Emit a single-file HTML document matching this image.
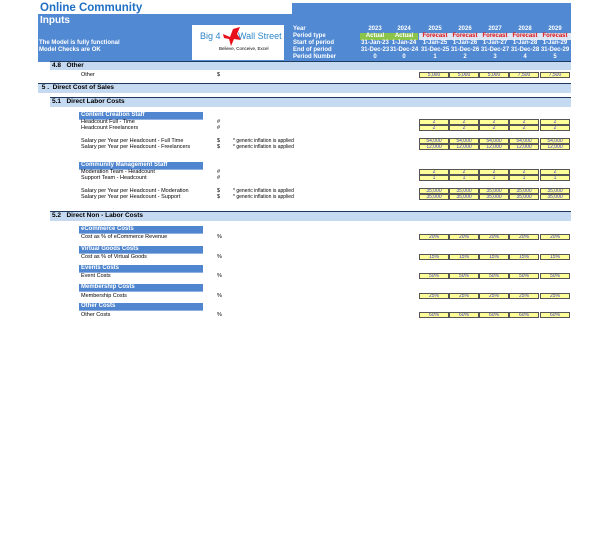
<!DOCTYPE html>
<html><head><meta charset="utf-8"><style>
*{margin:0;padding:0;box-sizing:border-box}
body{width:600px;height:537px;background:#fff;position:relative;overflow:hidden;font-family:"Liberation Sans",Arial,sans-serif;font-size:5.5px;color:#000}
div{position:absolute;white-space:nowrap}
.hb{color:#fff;font-weight:bold;font-size:6px;line-height:7px}
.c{text-align:center;width:30px}
.bar{background:#c5d9f1;border-top:1.5px solid #1f3a5f;font-weight:bold;font-size:6.5px;line-height:7px;padding-left:2px}
.sh{background:#4f86cf;color:#fff;font-weight:bold;font-size:6px;line-height:7px;width:124px;left:79px;padding-left:2px;border-bottom:1px solid #8fb0e0}
.y{background:#ffff99;border:1px solid #555;color:#3333cc;text-align:center;font-size:5px;line-height:4px;width:30px;height:6px;overflow:hidden}
.l{left:81px;font-size:5.5px}
.u{left:217px;font-size:5.5px}
.g{left:233px;font-size:5px}
</style></head><body>
<div style="left:40px;top:2px;color:#1f6fc5;font-weight:bold;font-size:11.5px">Online Community</div>
<div style="left:38px;top:14px;width:254px;height:48px;background:#5189d3"></div>
<div style="left:292px;top:3px;width:279px;height:59px;background:#5189d3"></div>
<div style="left:40px;top:15px;color:#fff;font-weight:bold;font-size:10px">Inputs</div>
<div class="hb" style="left:39px;top:40px">The Model is fully functional</div>
<div class="hb" style="left:39px;top:47px">Model Checks are OK</div>
<div style="left:192px;top:25px;width:92px;height:35px;background:#fff"></div>
<div style="left:200px;top:31px;color:#2f86c8;font-size:9px">Big 4</div>
<div style="left:238px;top:31px;color:#2f86c8;font-size:9px">Wall Street</div>
<svg style="position:absolute;left:221px;top:26px" width="22" height="22"><path d="M2 8 L9 11 L12 3 L19 1 L16 8 L20 14 L13 13 L10 20 L8 13 L3 12 Z" fill="#e8101a"/></svg>
<div style="left:219px;top:46px;font-size:4.5px">Believe, Conceive, Excel</div>
<div class="hb" style="left:293px;top:26px">Year</div>
<div class="hb" style="left:293px;top:33px">Period type</div>
<div class="hb" style="left:293px;top:40px">Start of period</div>
<div class="hb" style="left:293px;top:47px">End of period</div>
<div class="hb" style="left:293px;top:54px">Period Number</div>
<div style="left:360px;top:33px;width:58px;height:7px;background:#8cc34a"></div>
<div style="left:419px;top:33px;width:152px;height:7px;background:#dbe5f4"></div>
<div class="hb c" style="left:360px;top:26px">2023</div><div class="hb c" style="left:389px;top:26px">2024</div><div class="hb c" style="left:420px;top:26px">2025</div><div class="hb c" style="left:450px;top:26px">2026</div><div class="hb c" style="left:480px;top:26px">2027</div><div class="hb c" style="left:510px;top:26px">2028</div><div class="hb c" style="left:540px;top:26px">2029</div>
<div class="hb c" style="left:360px;top:33px">Actual</div><div class="hb c" style="left:389px;top:33px">Actual</div>
<div class="hb c" style="left:420px;top:33px;color:#e01010">Forecast</div><div class="hb c" style="left:450px;top:33px;color:#e01010">Forecast</div><div class="hb c" style="left:480px;top:33px;color:#e01010">Forecast</div><div class="hb c" style="left:510px;top:33px;color:#e01010">Forecast</div><div class="hb c" style="left:540px;top:33px;color:#e01010">Forecast</div>
<div class="hb c" style="left:360px;top:40px">31-Jan-23</div><div class="hb c" style="left:389px;top:40px">1-Jan-24</div><div class="hb c" style="left:420px;top:40px">1-Jan-25</div><div class="hb c" style="left:450px;top:40px">1-Jan-26</div><div class="hb c" style="left:480px;top:40px">1-Jan-27</div><div class="hb c" style="left:510px;top:40px">1-Jan-28</div><div class="hb c" style="left:540px;top:40px">1-Jan-29</div>
<div class="hb c" style="left:360px;top:47px">31-Dec-23</div><div class="hb c" style="left:389px;top:47px">31-Dec-24</div><div class="hb c" style="left:420px;top:47px">31-Dec-25</div><div class="hb c" style="left:450px;top:47px">31-Dec-26</div><div class="hb c" style="left:480px;top:47px">31-Dec-27</div><div class="hb c" style="left:510px;top:47px">31-Dec-28</div><div class="hb c" style="left:540px;top:47px">31-Dec-29</div>
<div class="hb c" style="left:360px;top:54px">0</div><div class="hb c" style="left:389px;top:54px">0</div><div class="hb c" style="left:420px;top:54px">1</div><div class="hb c" style="left:450px;top:54px">2</div><div class="hb c" style="left:480px;top:54px">3</div><div class="hb c" style="left:510px;top:54px">4</div><div class="hb c" style="left:540px;top:54px">5</div>

<div class="bar" style="left:50px;top:61px;width:521px;height:9px">4.8&nbsp;&nbsp; Other</div>
<div class="l" style="top:72px">Other</div><div class="u" style="top:72px">$</div>
<div class="bar" style="left:38px;top:83px;width:533px;height:10px">&nbsp;5 .&nbsp; Direct Cost of Sales</div>
<div class="bar" style="left:50px;top:97px;width:521px;height:10px">5.1&nbsp;&nbsp; Direct Labor Costs</div>

<div class="sh" style="top:112px">Content Creation Staff</div>
<div class="l" style="top:119px">Headcount Full - Time</div><div class="u" style="top:119px">#</div>
<div class="l" style="top:125px">Headcount Freelancers</div><div class="u" style="top:125px">#</div>
<div class="l" style="top:138px">Salary per Year per Headcount - Full Time</div><div class="u" style="top:138px">$</div><div class="g" style="top:138px">* generic inflation is applied</div>
<div class="l" style="top:144px">Salary per Year per Headcount - Freelancers</div><div class="u" style="top:144px">$</div><div class="g" style="top:144px">* generic inflation is applied</div>
<div class="sh" style="top:162px">Community Management Staff</div>
<div class="l" style="top:169px">Moderation Team - Headcount</div><div class="u" style="top:169px">#</div>
<div class="l" style="top:175px">Support Team - Headcount</div><div class="u" style="top:175px">#</div>
<div class="l" style="top:188px">Salary per Year per Headcount - Moderation</div><div class="u" style="top:188px">$</div><div class="g" style="top:188px">* generic inflation is applied</div>
<div class="l" style="top:194px">Salary per Year per Headcount - Support</div><div class="u" style="top:194px">$</div><div class="g" style="top:194px">* generic inflation is applied</div>

<div class="bar" style="left:50px;top:211px;width:521px;height:10px">5.2&nbsp;&nbsp; Direct Non - Labor Costs</div>
<div class="sh" style="top:226px">eCommerce Costs</div>
<div class="l" style="top:234px">Cost as % of eCommerce Revenue</div><div class="u" style="top:234px">%</div>
<div class="sh" style="top:246px">Virtual Goods Costs</div>
<div class="l" style="top:254px">Cost as % of Virtual Goods</div><div class="u" style="top:254px">%</div>
<div class="sh" style="top:265px">Events Costs</div>
<div class="l" style="top:273px">Event Costs</div><div class="u" style="top:273px">%</div>
<div class="sh" style="top:284px">Membership Costs</div>
<div class="l" style="top:293px">Membership Costs</div><div class="u" style="top:293px">%</div>
<div class="sh" style="top:303px">Other Costs</div>
<div class="l" style="top:312px">Other Costs</div><div class="u" style="top:312px">%</div>

<div class="y" style="left:419px;top:72px">5,000</div><div class="y" style="left:449px;top:72px">5,000</div><div class="y" style="left:479px;top:72px">5,000</div><div class="y" style="left:509px;top:72px">7,500</div><div class="y" style="left:540px;top:72px">7,500</div>
<div class="y" style="left:419px;top:119px">2</div><div class="y" style="left:449px;top:119px">2</div><div class="y" style="left:479px;top:119px">2</div><div class="y" style="left:509px;top:119px">2</div><div class="y" style="left:540px;top:119px">2</div>
<div class="y" style="left:419px;top:125px">2</div><div class="y" style="left:449px;top:125px">2</div><div class="y" style="left:479px;top:125px">2</div><div class="y" style="left:509px;top:125px">2</div><div class="y" style="left:540px;top:125px">2</div>
<div class="y" style="left:419px;top:138px">54,000</div><div class="y" style="left:449px;top:138px">54,000</div><div class="y" style="left:479px;top:138px">54,000</div><div class="y" style="left:509px;top:138px">54,000</div><div class="y" style="left:540px;top:138px">54,000</div>
<div class="y" style="left:419px;top:144px">12,000</div><div class="y" style="left:449px;top:144px">12,000</div><div class="y" style="left:479px;top:144px">12,000</div><div class="y" style="left:509px;top:144px">12,000</div><div class="y" style="left:540px;top:144px">12,000</div>
<div class="y" style="left:419px;top:169px">2</div><div class="y" style="left:449px;top:169px">2</div><div class="y" style="left:479px;top:169px">2</div><div class="y" style="left:509px;top:169px">2</div><div class="y" style="left:540px;top:169px">2</div>
<div class="y" style="left:419px;top:175px">1</div><div class="y" style="left:449px;top:175px">1</div><div class="y" style="left:479px;top:175px">1</div><div class="y" style="left:509px;top:175px">1</div><div class="y" style="left:540px;top:175px">1</div>
<div class="y" style="left:419px;top:188px">35,000</div><div class="y" style="left:449px;top:188px">35,000</div><div class="y" style="left:479px;top:188px">35,000</div><div class="y" style="left:509px;top:188px">35,000</div><div class="y" style="left:540px;top:188px">35,000</div>
<div class="y" style="left:419px;top:194px">35,000</div><div class="y" style="left:449px;top:194px">35,000</div><div class="y" style="left:479px;top:194px">35,000</div><div class="y" style="left:509px;top:194px">35,000</div><div class="y" style="left:540px;top:194px">35,000</div>
<div class="y" style="left:419px;top:234px">20%</div><div class="y" style="left:449px;top:234px">20%</div><div class="y" style="left:479px;top:234px">20%</div><div class="y" style="left:509px;top:234px">20%</div><div class="y" style="left:540px;top:234px">20%</div>
<div class="y" style="left:419px;top:254px">15%</div><div class="y" style="left:449px;top:254px">15%</div><div class="y" style="left:479px;top:254px">15%</div><div class="y" style="left:509px;top:254px">15%</div><div class="y" style="left:540px;top:254px">15%</div>
<div class="y" style="left:419px;top:273px">50%</div><div class="y" style="left:449px;top:273px">50%</div><div class="y" style="left:479px;top:273px">50%</div><div class="y" style="left:509px;top:273px">50%</div><div class="y" style="left:540px;top:273px">50%</div>
<div class="y" style="left:419px;top:293px">25%</div><div class="y" style="left:449px;top:293px">25%</div><div class="y" style="left:479px;top:293px">25%</div><div class="y" style="left:509px;top:293px">25%</div><div class="y" style="left:540px;top:293px">25%</div>
<div class="y" style="left:419px;top:312px">60%</div><div class="y" style="left:449px;top:312px">60%</div><div class="y" style="left:479px;top:312px">60%</div><div class="y" style="left:509px;top:312px">60%</div><div class="y" style="left:540px;top:312px">60%</div>
</body></html>
